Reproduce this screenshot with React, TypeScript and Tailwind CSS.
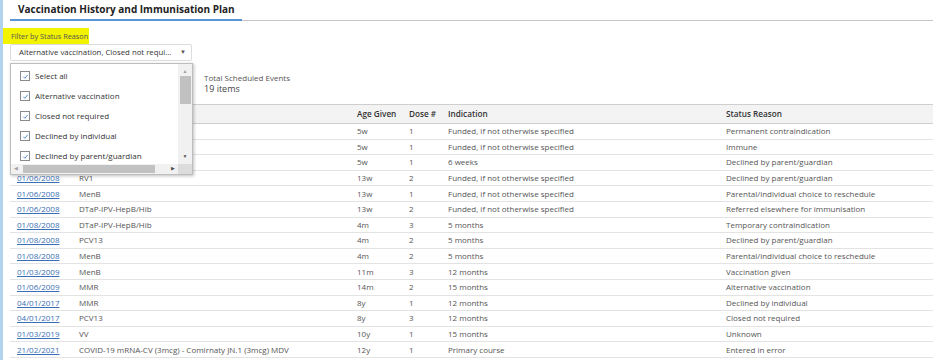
import React from 'react';

type Row = {
  date: string;
  vaccine: string;
  age: string;
  dose: string;
  indication: string;
  status: string;
};

// first three rows sit under the open filter list, so their date/vaccine cells are left blank
const rows: Row[] = [
  { date: '', vaccine: '', age: '5w', dose: '1', indication: 'Funded, if not otherwise specified', status: 'Permanent contraindication' },
  { date: '', vaccine: '', age: '5w', dose: '1', indication: 'Funded, if not otherwise specified', status: 'Immune' },
  { date: '', vaccine: '', age: '5w', dose: '1', indication: '6 weeks', status: 'Declined by parent/guardian' },
  { date: '01/06/2008', vaccine: 'RV1', age: '13w', dose: '2', indication: 'Funded, if not otherwise specified', status: 'Declined by parent/guardian' },
  { date: '01/06/2008', vaccine: 'MenB', age: '13w', dose: '1', indication: 'Funded, if not otherwise specified', status: 'Parental/individual choice to reschedule' },
  { date: '01/06/2008', vaccine: 'DTaP-IPV-HepB/Hib', age: '13w', dose: '2', indication: 'Funded, if not otherwise specified', status: 'Referred elsewhere for immunisation' },
  { date: '01/08/2008', vaccine: 'DTaP-IPV-HepB/Hib', age: '4m', dose: '3', indication: '5 months', status: 'Temporary contraindication' },
  { date: '01/08/2008', vaccine: 'PCV13', age: '4m', dose: '2', indication: '5 months', status: 'Declined by parent/guardian' },
  { date: '01/08/2008', vaccine: 'MenB', age: '4m', dose: '2', indication: '5 months', status: 'Parental/individual choice to reschedule' },
  { date: '01/03/2009', vaccine: 'MenB', age: '11m', dose: '3', indication: '12 months', status: 'Vaccination given' },
  { date: '01/06/2009', vaccine: 'MMR', age: '14m', dose: '2', indication: '15 months', status: 'Alternative vaccination' },
  { date: '04/01/2017', vaccine: 'MMR', age: '8y', dose: '1', indication: '12 months', status: 'Declined by individual' },
  { date: '04/01/2017', vaccine: 'PCV13', age: '8y', dose: '3', indication: '12 months', status: 'Closed not required' },
  { date: '01/03/2019', vaccine: 'VV', age: '10y', dose: '1', indication: '15 months', status: 'Unknown' },
  { date: '21/02/2021', vaccine: 'COVID-19 mRNA-CV (3mcg) - Comirnaty JN.1 (3mcg) MDV', age: '12y', dose: '1', indication: 'Primary course', status: 'Entered in error' },
];

const options = [
  'Select all',
  'Alternative vaccination',
  'Closed not required',
  'Declined by individual',
  'Declined by parent/guardian',
];

const cols = 'grid grid-cols-[62px_278px_52px_39px_278px_1fr]';

function Check() {
  return (
    <span className="flex h-[10px] w-[10px] shrink-0 items-center justify-center border border-[#8a8a8a] bg-white">
      <svg width="7" height="7" viewBox="0 0 8 8">
        <path d="M1.5 4.3 L3.2 6 L6.6 2" fill="none" stroke="#3d78c9" strokeWidth="1" />
      </svg>
    </span>
  );
}

function StatusDropdown() {
  return (
    <div className="absolute left-[7px] top-[63px] z-10 h-[112px] w-[183px] border border-[#bdbdbd] bg-white shadow-[1px_1px_3px_rgba(0,0,0,0.25)]">
      <div className="flex h-[100px]">
        <ul className="flex-1 overflow-hidden pt-[2px]">
          {options.map((o) => (
            <li key={o} className="flex h-[20px] items-center gap-[5px] whitespace-nowrap pl-[9px] text-[8px] text-[#333]">
              <Check />
              <span>{o}</span>
            </li>
          ))}
        </ul>
        {/* vertical scrollbar */}
        <div className="flex w-[14px] flex-col items-center bg-[#f1f1f1]">
          <span className="mt-[3px] text-[5px] leading-[8px] text-[#a0a0a0]">▲</span>
          <div className="mt-[1px] h-[28px] w-[11px] bg-[#c1c1c1]" />
          <div className="flex-1" />
          <span className="mb-[4px] text-[5px] leading-[8px] text-[#505050]">▼</span>
        </div>
      </div>
      {/* horizontal scrollbar */}
      <div className="flex h-[10px]">
        <div className="flex flex-1 items-center bg-[#f1f1f1] px-[3px]">
          <span className="text-[5px] text-[#a0a0a0]">◀</span>
          <div className="ml-[5px] h-[8px] w-[132px] bg-[#c1c1c1]" />
          <div className="flex-1" />
          <span className="text-[5px] text-[#505050]">▶</span>
        </div>
        <div className="w-[14px] bg-[#dcdcdc]" />
      </div>
    </div>
  );
}

export default function App() {
  return (
    <div
      className="flex h-[360px] w-[933px] overflow-hidden bg-white text-[#555]"
      style={{ fontFamily: '"Open Sans", "Noto Sans", sans-serif' }}
    >
      <div className="w-[3px] shrink-0 bg-[#b3d2ee]" />
      <div className="relative flex-1">
        {/* title with tab underline */}
        <div className="ml-[7px] flex border-b border-[#c6c6c6]">
          <div className="-mb-px border-b-2 border-[#5b95d8] pl-[8px] pr-[7px] pt-[3px] pb-[3px]">
            <h1 className="text-[10px] font-bold leading-[13px] text-[#222]">
              Vaccination History and Immunisation Plan
            </h1>
          </div>
        </div>

        {/* filter */}
        <div className="mt-[7px] inline-block bg-[#f3f300] py-[3px] pl-[8px] pr-[1px] text-[7.3px] leading-[10px] text-[#555]">
          Filter by Status Reason
        </div>
        <div className="ml-[7px] mt-[-1px] flex h-[17px] w-[182px] items-center justify-between rounded-[2px] border border-[#dcdcdc] pl-[8px] pr-[5px] text-[7.8px] text-[#333]">
          <span className="whitespace-nowrap">Alternative vaccination, Closed not requi...</span>
          <span className="text-[6px] text-[#555]">▼</span>
        </div>

        <StatusDropdown />

        {/* summary */}
        <div className="ml-[201px] mt-[11px] h-[32px]">
          <div className="text-[8px] leading-[11px] text-[#555]">Total Scheduled Events</div>
          <div className="text-[9px] leading-[12px] text-[#444]">19 items</div>
        </div>

        {/* table */}
        <div className="ml-[7px]">
          <div className={`${cols} h-[20px] items-center border-y border-[#cfcfcf] bg-[#f3f3f3] text-[8.2px] font-semibold text-[#333]`}>
            <div className="pl-[7px]" />
            <div className="pl-[7px]" />
            <div className="pl-[7px]">Age Given</div>
            <div className="pl-[7px]">Dose #</div>
            <div className="pl-[7px]">Indication</div>
            <div className="pl-[7px]">Status Reason</div>
          </div>
          {rows.map((r, i) => (
            <div key={i} className={`${cols} h-[15.6px] items-center border-b border-[#e3e3e3] text-[8px] text-[#555]`}>
              <div className="pl-[7px]">
                {r.date && <a href="#" className="text-[#3a6fb5] underline">{r.date}</a>}
              </div>
              <div className="pl-[7px] whitespace-nowrap">{r.vaccine}</div>
              <div className="pl-[7px]">{r.age}</div>
              <div className="pl-[7px]">{r.dose}</div>
              <div className="pl-[7px]">{r.indication}</div>
              <div className="pl-[7px]">{r.status}</div>
            </div>
          ))}
        </div>
      </div>
    </div>
  );
}
